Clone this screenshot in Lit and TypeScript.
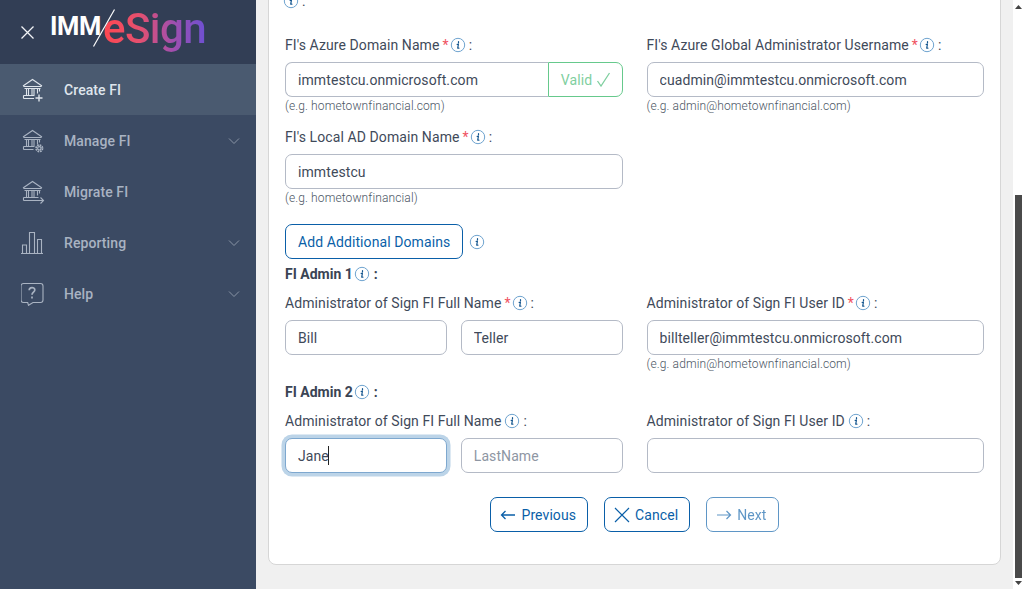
import { LitElement, html, css, svg } from "lit";
import { customElement } from "lit/decorators.js";

const info = html`<svg class="info" width="16" height="16" viewBox="0 0 16 16" fill="none"><circle cx="8" cy="8" r="6.7" stroke="#6ea3cf" stroke-width="1"/><path d="M8.5 4.6v1.3M7.1 7.3h1.3L7.7 11.2h1.2" stroke="#14568f" stroke-width="1.2" stroke-linecap="round" stroke-linejoin="round"/></svg>`;

const bank = svg`<path d="M2 8 11.5 1.5 21 8M2.5 8.5h18M3.5 10.5h16" /><path d="M5.5 10.5v6.5M7.5 10.5v6.5M11 10.5v6.5M13 10.5v6.5M16.5 10.5v5M18.5 10.5v3"/>`;

const icons: Record<string, unknown> = {
  create: html`<svg viewBox="0 0 24 24" width="24" height="24" fill="none" stroke="currentColor" stroke-width="1.1">${bank}<path d="M2.5 17.5h11M2.5 20.5h10.500M2.500 17.500v3"/><path stroke-width="1.400" d="M18 16.500v7M14.500 20h7"/></svg>`,
  manage: html`<svg viewBox="0 0 24 24" width="24" height="24" fill="none" stroke="currentColor" stroke-width="1.1">${bank}<path d="M2.5 17.500h11M2.500 20.500h10M2.500 17.500v3"/><circle cx="18.300" cy="19.300" r="3.200" stroke-width="1.800" stroke-dasharray="1.700 .8"/><circle cx="18.300" cy="19.300" r="1.700"/></svg>`,
  migrate: html`<svg viewBox="0 0 24 24" width="24" height="24" fill="none" stroke="currentColor" stroke-width="1.1">${bank}<path d="M2.500 17.500h15M2.500 20.500h20M2.500 17.500v3M19.500 17.500l3 3-3 3"/></svg>`,
  report: html`<svg viewBox="0 0 24 24" width="24" height="24" fill="none" stroke="currentColor" stroke-width="1.1"><path d="M0 22.500h22M1.500 22V14h4v8M8.500 22V1.500h5V22M16.500 22V8.500h4V22"/></svg>`,
  help: html`<svg viewBox="0 0 24 24" width="24" height="24" fill="none" stroke="currentColor" stroke-width="1.1"><path transform="translate(-1 0)" d="M3.500 1.500h17a2.500 2.500 0 0 1 2.500 2.500v14a2.500 2.500 0 0 1-2.500 2.500H13l-4.500 2.800-.8-2.800H3.500A2.500 2.500 0 0 1 1 18V4a2.500 2.500 0 0 1 2.500-2.500Z"/><path transform="translate(-1 0)" stroke-width="1.700" d="M9.200 8.300c0-3.600 5.600-3.600 5.600-.2 0 2-2.800 2.200-2.800 4.600M12 14.500v2"/></svg>`,
};

const chevron = html`<svg class="chev" width="12" height="8" viewBox="0 0 12 8" fill="none" stroke="currentColor" stroke-width="1"><path d="M1 1.500 6 6.500l5-5"/></svg>`;

const menu = [
  { icon: "create", label: "Create FI", active: true },
  { icon: "manage", label: "Manage FI", chev: true },
  { icon: "migrate", label: "Migrate FI" },
  { icon: "report", label: "Reporting", chev: true },
  { icon: "help", label: "Help", chev: true },
];

@customElement("app-root")
export class AppRoot extends LitElement {
  static styles = css`
    :host { display: flex; width: 1024px; height: 589px; overflow: hidden; font-family: Roboto, "Liberation Sans", sans-serif; font-size: 14px; letter-spacing: 0.09px; color: #3f4a5a; background: #f0f0f0; }
    * { box-sizing: border-box; }
    .side { width: 256px; flex: none; background: #3b4a63; color: #a9b3c2; }
    .head { height: 64px; background: #323e55; display: flex; align-items: center; padding-left: 21px; gap: 17px; }
    .logo { position: relative; display: flex; width: 160px; height: 64px; }
    .imm { font-size: 25.500px; font-weight: 700; color: #fff; line-height: 1; margin: 14px 0 0 -1px; letter-spacing: -0.400px; }
    .esign { font-size: 42px; font-weight: 500; line-height: 1; margin: 8px 0 0 2px; height: 50px; letter-spacing: -0.500px; background: linear-gradient(90deg, #ff4750 0%, #e5506f 35%, #a04fae 68%, #6d50d2 100%); -webkit-background-clip: text; background-clip: text; color: transparent; }
    .slash { position: absolute; left: 42px; top: 9px; }
    .item { height: 51px; display: flex; align-items: center; padding-left: 21px; font-weight: 500; }
    .item.active { background: #4a5a70; color: #dfe5ec; }
    .item > svg:first-child { margin-right: 19px; flex: none; }
    .item .chev { margin-left: auto; margin-right: 16px; color: #8a95a6; }
    .main { flex: 1; min-width: 0; padding: 0 12px; }
    .card { background: #fff; border: 1px solid #d6d6d6; border-radius: 8px; margin-top: -26px; padding: 16px 16px 32px; }
    .grid { display: grid; grid-template-columns: 1fr 1fr; column-gap: 24px; align-items: start; }
    .names { display: grid; grid-template-columns: 1fr 1fr; column-gap: 14px; }
    .lab { display: flex; align-items: center; height: 20px; white-space: pre; margin-bottom: 7px; line-height: 20px; }
    .star { color: #f0525f; margin-left: 3px; }
    .info { flex: none; margin-left: 1px; }
    .bare { margin-left: 2px; }
    .colon { margin-left: 3px; }
    .top { margin: 0 0 24px -3px; }
    input { display: block; width: 100%; height: 35px; border: 1px solid #b4bac6; border-radius: 7px; padding: 0 12px; font: inherit; letter-spacing: inherit; color: #3f4a5a; background: #fff; outline: none; }
    input::placeholder { color: #8e96a3; }
    .group { display: flex; }
    .group input { border-radius: 7px 0 0 7px; border-right: none; flex: 1; min-width: 0; }
    .valid { width: 75px; flex: none; height: 35px; border: 1px solid #66c98c; border-radius: 0 7px 7px 0; color: #7fcf9f; display: flex; align-items: center; justify-content: center; gap: 4px; padding-left: 2px; }
    .hint { font-size: 12px; font-weight: 300; height: 16px; padding-top: 1px; line-height: 16px; letter-spacing: 0.12px; color: #4a5563; }
    .gap14 { margin-top: 14px; }
    .add { display: flex; align-items: center; margin-top: 19px; gap: 5px; }
    .btn { height: 35px; display: inline-flex; align-items: center; justify-content: center; background: #fff; border: 1px solid #0a5fa8; border-radius: 7px; color: #0a5fa8; font: inherit; letter-spacing: inherit; padding: 0 12px; }
    .head2 { display: flex; align-items: center; font-weight: 700; height: 20px; white-space: pre; color: #3a4454; letter-spacing: 0; }
    .head2 .colon { margin-left: 4px; }
    .a1 { margin-top: 5px; margin-bottom: 9px; }
    .a2 { margin-top: 11px; margin-bottom: 9px; }
    .focus { position: relative; }
    .focus input { border-color: #7ea8cf; box-shadow: 0 0 0 3.5px #bcd4e8; }
    .caret { position: absolute; left: 43px; top: 8px; width: 1px; height: 19px; background: #222; }
    .actions { display: flex; justify-content: center; gap: 16px; margin-top: 24px; }
    .actions .btn { gap: 5px; padding: 0 11px 0 9px; }
    .btn.next { opacity: .65; }
    .sb { width: 11px; flex: none; background: #fff; padding-left: 2px; display: flex; flex-direction: column; align-items: stretch; }
    .thumb { width: 7px; height: 383px; background: #4a4a4a; margin-top: 186px; }
    .arrow { width: 7px; display: flex; justify-content: center; }
    .arrow.up { margin-top: 5px; }
    .arrow.down { margin-top: 3px; }
  `;

  render() {
    return html`
      <aside class="side">
        <div class="head">
          <svg width="13" height="13" viewBox="0 0 13 13" stroke="#f2f4f7" stroke-width="1.300" fill="none"><path d="M.5.500l12 12M12.500.500l-12 12"/></svg>
          <div class="logo">
            <span class="imm">IMM</span>
            <svg class="slash" width="22" height="38" viewBox="0 0 22 38" stroke="#fff" stroke-width="1.200" fill="none"><path d="M21.500.500 .500 37.500"/></svg>
            <span class="esign">eSign</span>
          </div>
        </div>
        ${menu.map((m) => html`<div class="item ${m.active ? "active" : ""}">${icons[m.icon]}<span>${m.label}</span>${m.chev ? chevron : ""}</div>`)}
      </aside>
      <main class="main">
        <div class="card">
          <div class="lab top">${info}<span class="colon">:</span></div>
          <div class="grid">
            <div>
              <div class="lab">FI's Azure Domain Name<span class="star">*</span>${info}<span class="colon">:</span></div>
              <div class="group">
                <input value="immtestcu.onmicrosoft.com" />
                <div class="valid">Valid <svg width="15" height="15" viewBox="0 0 15 15" fill="none" stroke="#7fcf9f" stroke-width="1.300"><path d="M1.500 9l3.500 5L13.500 1"/></svg></div>
              </div>
              <div class="hint">(e.g. hometownfinancial.com)</div>
            </div>
            <div>
              <div class="lab">FI's Azure Global Administrator Username<span class="star">*</span>${info}<span class="colon">:</span></div>
              <input value="cuadmin@immtestcu.onmicrosoft.com" />
              <div class="hint">(e.g. admin@hometownfinancial.com)</div>
            </div>
            <div class="gap14">
              <div class="lab">FI's Local AD Domain Name<span class="star">*</span>${info}<span class="colon">:</span></div>
              <input value="immtestcu" />
              <div class="hint">(e.g. hometownfinancial)</div>
            </div>
          </div>
          <div class="add"><button class="btn">Add Additional Domains</button>${info}</div>
          <div class="head2 a1">FI Admin 1${info}<span class="colon">:</span></div>
          <div class="grid">
            <div>
              <div class="lab">Administrator of Sign FI Full Name<span class="star">*</span>${info}<span class="colon">:</span></div>
              <div class="names"><input value="Bill" /><input value="Teller" /></div>
            </div>
            <div>
              <div class="lab">Administrator of Sign FI User ID<span class="star">*</span>${info}<span class="colon">:</span></div>
              <input value="billteller@immtestcu.onmicrosoft.com" />
              <div class="hint">(e.g. admin@hometownfinancial.com)</div>
            </div>
          </div>
          <div class="head2 a2">FI Admin 2${info}<span class="colon">:</span></div>
          <div class="grid">
            <div>
              <div class="lab">Administrator of Sign FI Full Name<span class="bare"></span>${info}<span class="colon">:</span></div>
              <div class="names">
                <div class="focus"><input value="Jane" /><span class="caret"></span></div>
                <input placeholder="LastName" />
              </div>
            </div>
            <div>
              <div class="lab">Administrator of Sign FI User ID<span class="bare"></span>${info}<span class="colon">:</span></div>
              <input />
            </div>
          </div>
          <div class="actions">
            <button class="btn"><svg width="16" height="12" viewBox="0 0 16 12" fill="none" stroke="currentColor" stroke-width="1.300"><path d="M15 6H1.500M5.500 2 1.500 6l4 4"/></svg>Previous</button>
            <button class="btn"><svg width="16" height="16" viewBox="0 0 16 16" fill="none" stroke="currentColor" stroke-width="1.200"><path d="M1 1l14 14M15 1 1 15"/></svg>Cancel</button>
            <button class="btn next"><svg width="16" height="12" viewBox="0 0 16 12" fill="none" stroke="currentColor" stroke-width="1.200"><path d="M1 6h13.500M10.500 2l4 4-4 4"/></svg>Next</button>
          </div>
        </div>
      </main>
      <div class="sb">
        <div class="arrow up"><svg width="7" height="4" viewBox="0 0 7 4" fill="#444"><path d="M3.500 0 7 4H0Z"/></svg></div>
        <div class="thumb"></div>
        <div class="arrow down"><svg width="7" height="4" viewBox="0 0 7 4" fill="#444"><path d="M0 0h7L3.500 4Z"/></svg></div>
      </div>
    `;
  }
}
